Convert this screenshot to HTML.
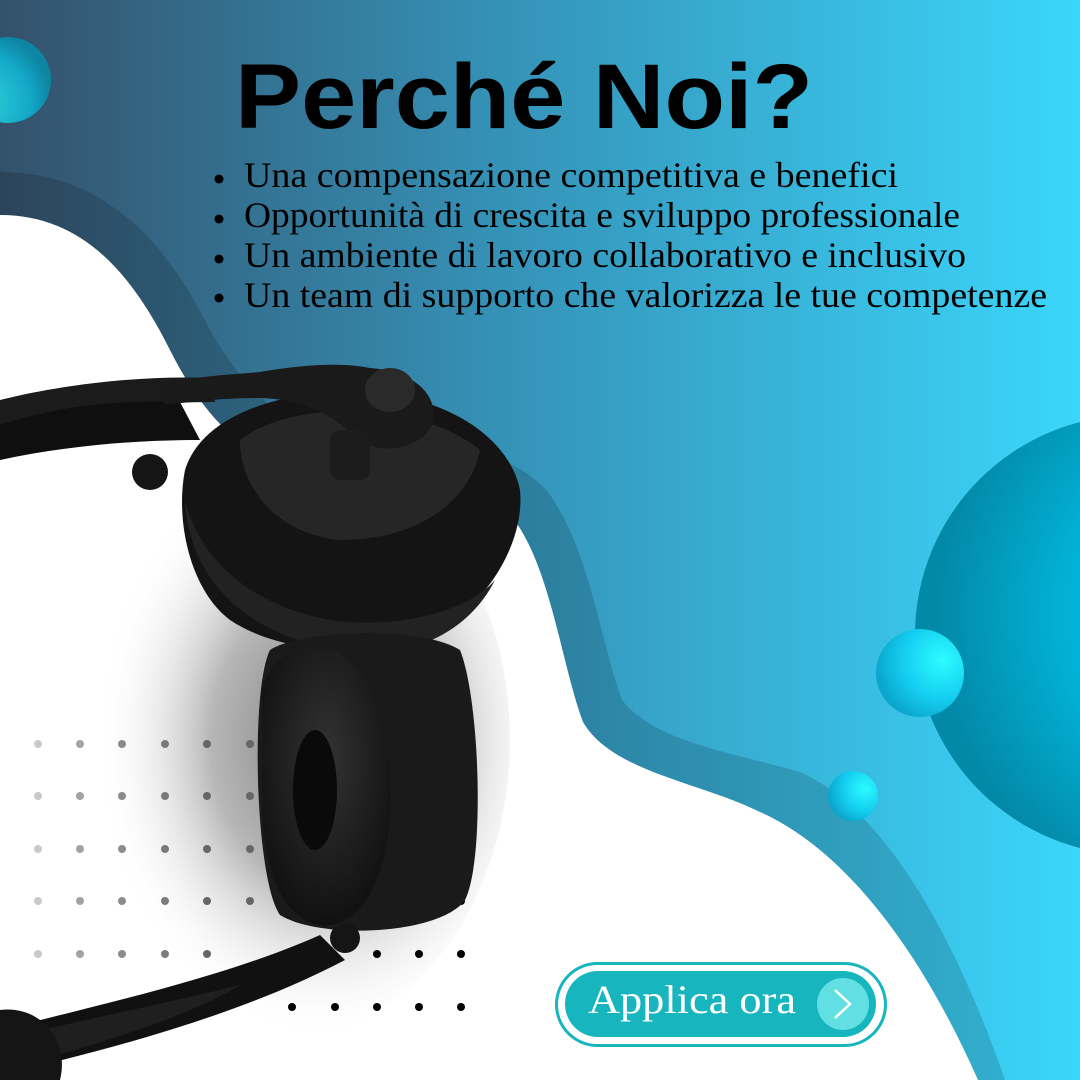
<!DOCTYPE html>
<html><head><meta charset="utf-8"><style>
html,body{margin:0;padding:0;width:1080px;height:1080px;overflow:hidden;background:#fff}
svg{display:block}
</style></head><body>
<svg width="1080" height="1080" viewBox="0 0 1080 1080" xmlns="http://www.w3.org/2000/svg">
<defs>
<linearGradient id="bg" x1="0" y1="0" x2="1" y2="0">
<stop offset="0" stop-color="#34516b"/><stop offset="0.45" stop-color="#3590b5"/><stop offset="1" stop-color="#3bd6fb"/>
</linearGradient>
<radialGradient id="big" cx="0.75" cy="0.45" r="0.7">
<stop offset="0" stop-color="#0bd0f4"/><stop offset="0.6" stop-color="#02b0d4"/><stop offset="1" stop-color="#0389a8"/>
</radialGradient>
<radialGradient id="mid" cx="0.75" cy="0.35" r="0.75">
<stop offset="0" stop-color="#2cfcff"/><stop offset="0.6" stop-color="#14cdf0"/><stop offset="1" stop-color="#0aa6cc"/>
</radialGradient>
<radialGradient id="tl" cx="0.2" cy="0.75" r="0.8">
<stop offset="0" stop-color="#2dd0d8"/><stop offset="0.7" stop-color="#14a8c8"/><stop offset="1" stop-color="#0d86a4"/>
</radialGradient>
<radialGradient id="shadow" cx="0.6" cy="0.5" r="0.5">
<stop offset="0" stop-color="#666"/><stop offset="0.5" stop-color="#aaa"/><stop offset="1" stop-color="#fff" stop-opacity="0"/>
</radialGradient>
<radialGradient id="cup" cx="0.5" cy="0.4" r="0.6">
<stop offset="0" stop-color="#333"/><stop offset="1" stop-color="#111"/>
</radialGradient>
</defs>
<rect width="1080" height="1080" fill="url(#bg)"/>
<path d="M0,172 C110,172 170,250 210,330 C250,400 300,440 370,445 C450,450 505,445 548,492 C590,550 600,640 622,700 C655,742 730,752 800,772 C890,812 960,950 1005,1080 L0,1080 Z" fill="#000" opacity="0.15"/>
<path d="M0,215 C80,215 130,270 170,350 C210,430 260,470 330,480 C420,482 470,472 508,512 C550,560 560,660 583,722 C612,772 700,782 760,812 C850,852 925,960 978,1080 L0,1080 Z" fill="#fff"/>
<ellipse cx="280" cy="740" rx="230" ry="300" fill="url(#shadow)" opacity="0.85"/>
<g fill="#666">
<g opacity="0.35"><circle cx="38" cy="744" r="4"/><circle cx="38" cy="796" r="4"/><circle cx="38" cy="849" r="4"/><circle cx="38" cy="901" r="4"/><circle cx="38" cy="954" r="4"/></g>
<g opacity="0.6"><circle cx="80" cy="744" r="4"/><circle cx="80" cy="796" r="4"/><circle cx="80" cy="849" r="4"/><circle cx="80" cy="901" r="4"/><circle cx="80" cy="954" r="4"/></g>
<g opacity="0.75"><circle cx="122" cy="744" r="4"/><circle cx="122" cy="796" r="4"/><circle cx="122" cy="849" r="4"/><circle cx="122" cy="901" r="4"/><circle cx="122" cy="954" r="4"/></g>
<g opacity="0.85"><circle cx="165" cy="744" r="4"/><circle cx="165" cy="796" r="4"/><circle cx="165" cy="849" r="4"/><circle cx="165" cy="901" r="4"/><circle cx="165" cy="954" r="4"/></g>
<g><circle cx="207" cy="744" r="4"/><circle cx="207" cy="796" r="4"/><circle cx="207" cy="849" r="4"/><circle cx="207" cy="901" r="4"/><circle cx="207" cy="954" r="4"/></g>
<g><circle cx="250" cy="744" r="4"/><circle cx="250" cy="796" r="4"/><circle cx="250" cy="849" r="4"/><circle cx="250" cy="901" r="4"/></g>
</g>
<g fill="#000">
<circle cx="377" cy="954" r="4"/><circle cx="419" cy="954" r="4"/><circle cx="461" cy="954" r="4"/><circle cx="461" cy="901" r="4"/>
<circle cx="292" cy="1007" r="4"/><circle cx="335" cy="1007" r="4"/><circle cx="377" cy="1007" r="4"/><circle cx="419" cy="1007" r="4"/><circle cx="461" cy="1007" r="4"/>
</g>
<g>
<path d="M0,400 C60,385 140,375 210,378 L215,402 C150,402 70,410 0,428 Z" fill="#1b1b1b"/>
<path d="M0,425 C60,405 120,400 180,402 L200,440 C140,440 70,445 0,460 Z" fill="#0f0f0f"/>
<circle cx="150" cy="472" r="18" fill="#151515"/>
<path d="M185,470 C200,420 270,390 360,392 C450,395 510,440 520,490 C525,540 490,600 440,630 C390,655 290,660 230,620 C190,590 175,520 185,470 Z" fill="#141414"/>
<path d="M185,500 C190,600 280,660 400,650 C450,640 480,610 495,580 C470,610 400,630 330,620 C250,605 200,560 185,500 Z" fill="#222"/>
<path d="M240,440 C290,400 420,400 480,450 C470,500 420,540 340,540 C280,535 240,490 240,440 Z" fill="#262626"/>
<path d="M160,385 C200,375 230,375 260,372 C300,365 340,362 370,368 C420,372 440,400 432,425 C420,450 380,455 360,440 C340,425 320,400 260,398 C220,398 190,402 165,405 Z" fill="#1a1a1a"/>
<ellipse cx="390" cy="390" rx="25" ry="22" fill="#2a2a2a"/>
<rect x="330" y="430" width="40" height="50" rx="10" fill="#1c1c1c"/>
<path d="M270,650 C300,630 420,625 460,650 C480,700 485,860 465,900 C440,935 320,940 280,915 C255,880 250,690 270,650 Z" fill="#1a1a1a"/>
<path d="M262,700 C262,660 300,640 330,650 C380,665 395,760 390,820 C385,880 360,930 320,925 C280,920 262,860 262,800 Z" fill="url(#cup)"/>
<ellipse cx="315" cy="790" rx="22" ry="60" fill="#0a0a0a"/>
<path d="M0,1030 C120,1000 230,975 320,935 L345,960 C250,1010 130,1045 0,1075 Z" fill="#111"/>
<path d="M0,1040 C80,1020 160,1005 240,985 C200,1010 120,1040 0,1070 Z" fill="#2a2a2a" opacity="0.6"/>
<path d="M0,1010 C40,1005 70,1040 60,1080 L0,1080 Z" fill="#151515"/>
<circle cx="345" cy="938" r="15" fill="#151515"/>
</g>
<circle cx="1135" cy="635" r="220" fill="url(#big)"/>
<circle cx="920" cy="673" r="44" fill="url(#mid)"/>
<circle cx="853" cy="796" r="25" fill="url(#mid)"/>
<circle cx="8" cy="80" r="43" fill="url(#tl)"/>
<text x="235" y="128" font-family="Liberation Sans, sans-serif" font-weight="bold" font-size="92" fill="#000" textLength="578" lengthAdjust="spacingAndGlyphs">Perché Noi?</text>
<g font-family="Liberation Serif, serif" font-size="36" fill="#000">
<circle cx="219" cy="179" r="4.5"/><circle cx="219" cy="219" r="4.5"/><circle cx="219" cy="259" r="4.5"/><circle cx="219" cy="298" r="4.5"/>
<text x="244" y="187" textLength="654" lengthAdjust="spacingAndGlyphs">Una compensazione competitiva e benefici</text>
<text x="244" y="227" textLength="716" lengthAdjust="spacingAndGlyphs">Opportunità di crescita e sviluppo professionale</text>
<text x="244" y="267" textLength="722" lengthAdjust="spacingAndGlyphs">Un ambiente di lavoro collaborativo e inclusivo</text>
<text x="244" y="307" textLength="803" lengthAdjust="spacingAndGlyphs">Un team di supporto che valorizza le tue competenze</text>
</g>
<rect x="556.5" y="963.5" width="329" height="82" rx="41" fill="#fff" stroke="#17b6bf" stroke-width="3"/>
<rect x="565" y="971" width="311" height="66" rx="33" fill="#17b6bf"/>
<text x="588" y="1013" font-family="Liberation Serif, serif" font-size="40" fill="#fff" textLength="208" lengthAdjust="spacingAndGlyphs">Applica ora</text>
<circle cx="843" cy="1004" r="26" fill="#62dfe3"/>
<path d="M835,990 L850,1004 L835,1018" fill="none" stroke="#fff" stroke-width="2.5"/>
</svg>
</body></html>
